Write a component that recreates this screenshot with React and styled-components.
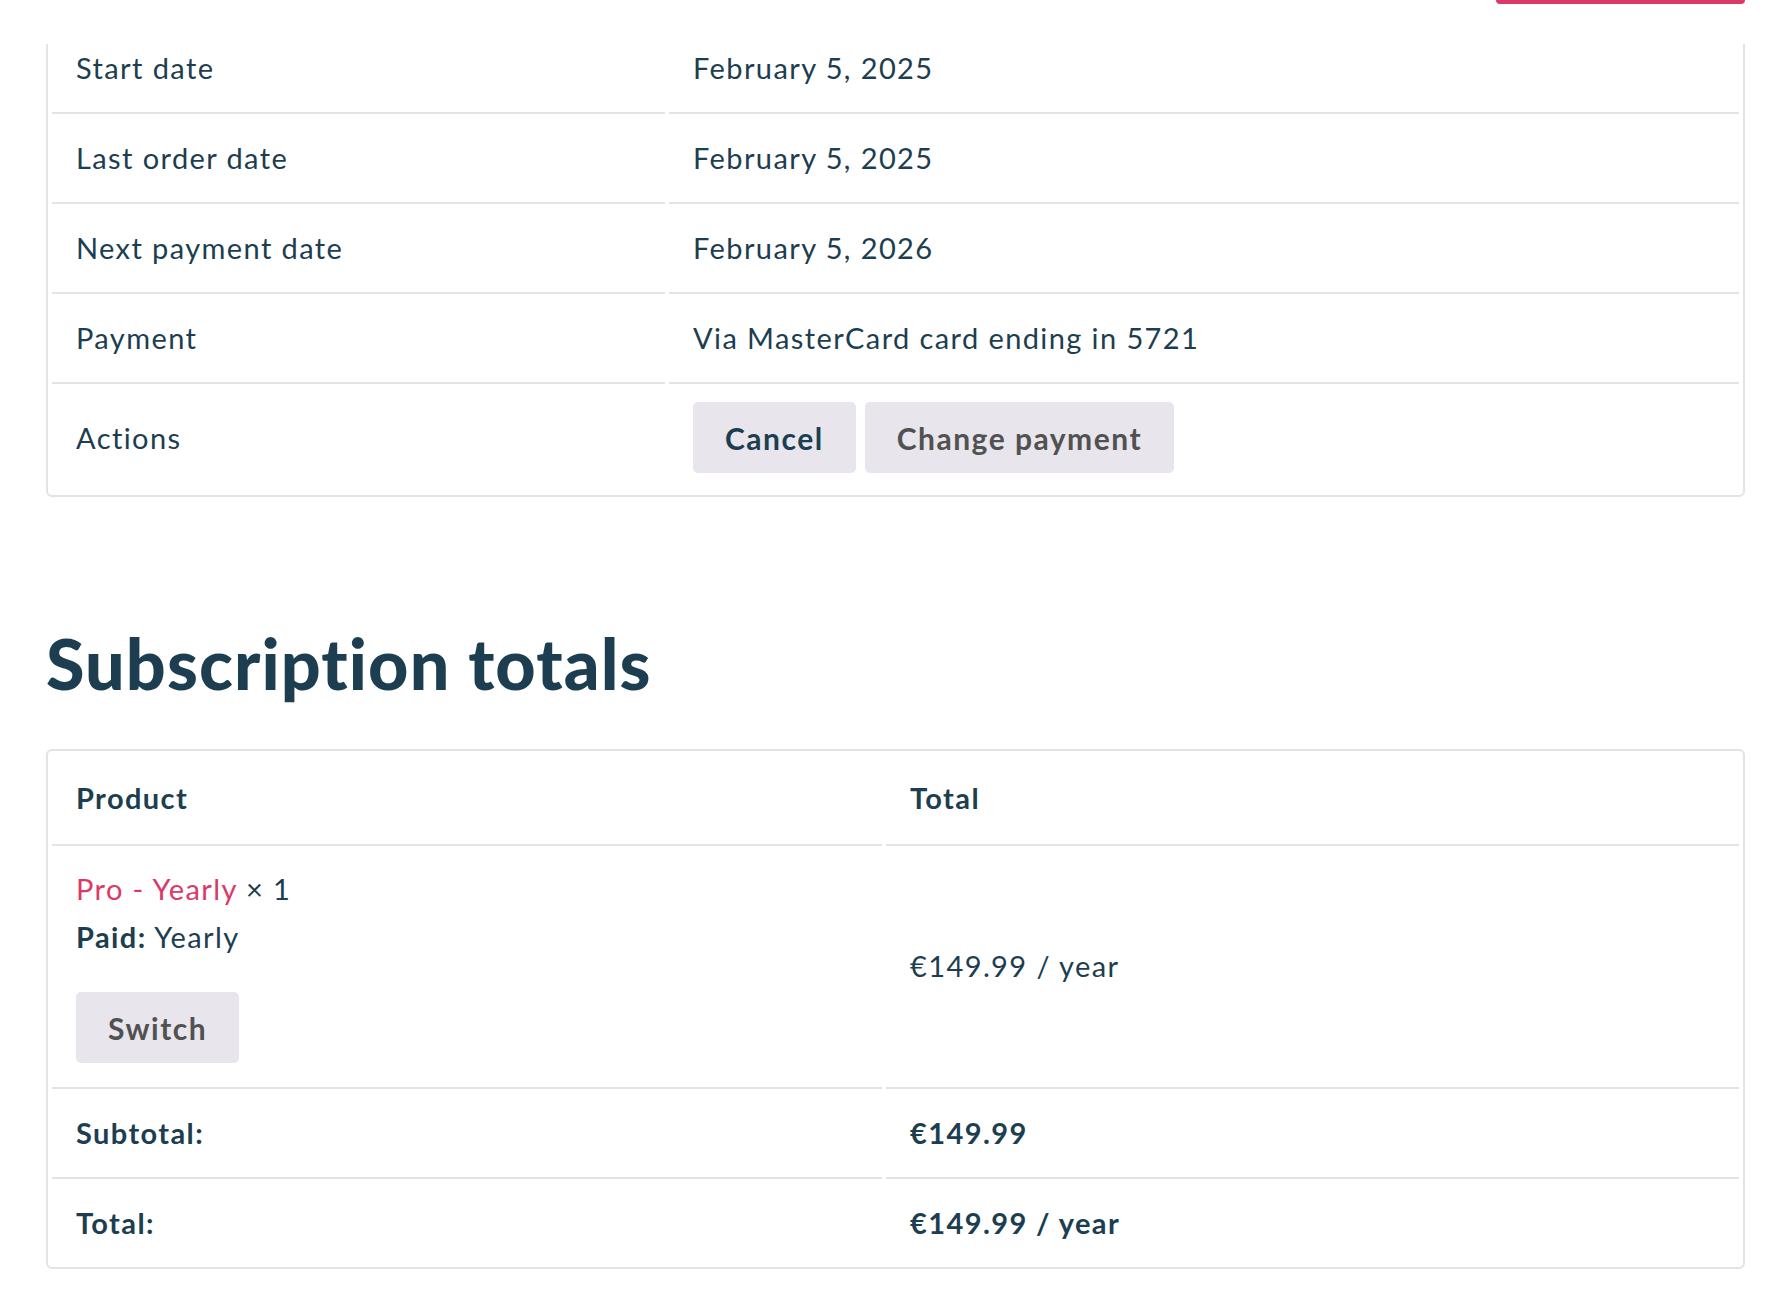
import styled, { createGlobalStyle } from 'styled-components';

const GlobalStyle = createGlobalStyle`
  html, body {
    margin: 0;
    padding: 0;
    background: #fff;
  }

  body {
    font-family: Lato, "Liberation Sans", sans-serif;
    color: #1c3e50;
  }
`;

const details = [
  { label: 'Start date', value: 'February 5, 2025' },
  { label: 'Last order date', value: 'February 5, 2025' },
  { label: 'Next payment date', value: 'February 5, 2026' },
  { label: 'Payment', value: 'Via MasterCard card ending in 5721' },
];

const App = () => {
  return (
    <>
      <GlobalStyle />
      <TopBar>
        <AccountButton aria-label="Account" />
      </TopBar>
      <Page>
        <ShopTable>
          <colgroup>
            <col style={{ width: 613 }} />
            <col />
          </colgroup>
          <tbody>
            {details.map((row) => (
              <tr key={row.label}>
                <Cell>{row.label}</Cell>
                <Cell>{row.value}</Cell>
              </tr>
            ))}
            <tr>
              <Cell $actions>Actions</Cell>
              <Cell $actions>
                <ButtonRow>
                  <ActionButton $dark>Cancel</ActionButton>
                  <ActionButton>Change payment</ActionButton>
                </ButtonRow>
              </Cell>
            </tr>
          </tbody>
        </ShopTable>

        <Heading>Subscription totals</Heading>

        <ShopTable>
          <colgroup>
            <col style={{ width: 830 }} />
            <col />
          </colgroup>
          <thead>
            <tr>
              <HeadCell>Product</HeadCell>
              <HeadCell>Total</HeadCell>
            </tr>
          </thead>
          <tbody>
            <tr>
              <Cell $product>
                <ProductLine>
                  <ProductLink href="#">Pro - Yearly</ProductLink> × 1
                </ProductLine>
                <ProductLine>
                  <strong>Paid:</strong> Yearly
                </ProductLine>
                <SwitchWrap>
                  <ActionButton>Switch</ActionButton>
                </SwitchWrap>
              </Cell>
              <Cell $product>€149.99 / year</Cell>
            </tr>
          </tbody>
          <tfoot>
            <tr>
              <Cell $bold>Subtotal:</Cell>
              <Cell $bold>€149.99</Cell>
            </tr>
            <tr>
              <Cell $bold>Total:</Cell>
              <Cell $bold>€149.99 / year</Cell>
            </tr>
          </tfoot>
        </ShopTable>
      </Page>
    </>
  );
};

const TopBar = styled.header`
  position: fixed;
  top: 0;
  left: 0;
  right: 0;
  height: 44px;
  z-index: 2;

  display: flex;
  justify-content: flex-end;
  align-items: flex-start;
  padding-right: 35px;

  background: #fff;
`;

const AccountButton = styled.button`
  width: 249px;
  height: 4px;

  margin: 0;
  padding: 0;

  border: none;
  border-radius: 0 0 6px 6px;
  background: #d93a67;
`;

const Page = styled.main`
  padding: 22px 35px 40px 46px;
`;

const ShopTable = styled.table`
  width: 100%;
  table-layout: fixed;

  border-collapse: separate;
  border-spacing: 4px 0;
  border: 2px solid #e3e3e3;
  border-radius: 6px;

  font-size: 29px;
  line-height: 42px;
  letter-spacing: 1.4px;

  tbody tr:first-child td {
    border-top: none;
  }

  thead + tbody tr:first-child td {
    border-top: 2px solid #e3e3e3;
  }
`;

const Cell = styled.td`
  padding: ${({ $actions, $product }) =>
    $actions ? '18px 24px 22px' : $product ? '22px 24px 24px' : '23px 24px'};

  border-top: 2px solid #e3e3e3;

  vertical-align: middle;
  text-align: left;
  font-weight: ${({ $bold }) => ($bold ? 700 : 400)};
`;

const HeadCell = styled.th`
  padding: 26px 24px 25px;

  text-align: left;
  font-weight: 700;
`;

const ButtonRow = styled.div`
  display: flex;
  gap: 9px;
`;

const ActionButton = styled.button`
  height: 71px;
  padding: 0 32px;

  border: none;
  border-radius: 5px;
  background: #e8e5ec;

  font-family: inherit;
  font-size: 30px;
  font-weight: 700;
  letter-spacing: 1.5px;
  color: ${({ $dark }) => ($dark ? '#1c3e50' : '#515151')};

  &:hover {
    cursor: pointer;
  }
`;

const ProductLine = styled.div`
  & + & {
    margin-top: 6px;
  }
`;

const ProductLink = styled.a`
  color: #d93a67;
  text-decoration: none;
`;

const SwitchWrap = styled.div`
  margin-top: 34px;
`;

const Heading = styled.h2`
  margin: 0;
  padding: 126px 0 46px;

  font-size: 70px;
  line-height: 80px;
  font-weight: 900;
  letter-spacing: 1.1px;
  color: #1c3e50;
`;

export default App;
